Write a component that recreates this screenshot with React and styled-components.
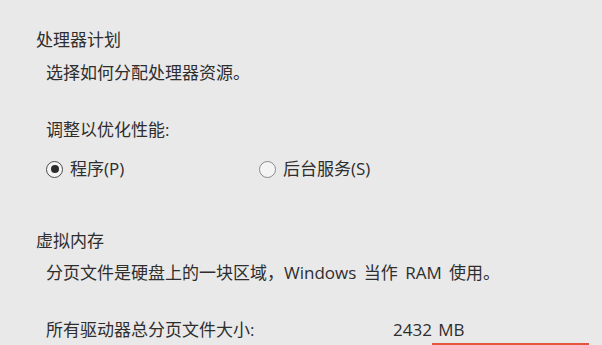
import React from 'react'
import styled, { createGlobalStyle } from 'styled-components'

const GlobalStyle = createGlobalStyle`
  html, body {
    margin: 0;
    padding: 0;
    background: #e9e9e9;
  }
  body {
    font-family: "Open Sans", "Noto Sans CJK SC", sans-serif;
    color: #2e2e2e;
  }
`

const Page = styled.div`
  width: 602px;
  height: 345px;
  overflow: hidden;
  box-sizing: border-box;
  padding: 28px 0 0 36px;
  background: #e9e9e9;
`

const SectionTitle = styled.div`
  font-size: 17px;
  line-height: 24px;
  margin-top: ${p => p.$top || 0}px;
`

const Body = styled.div`
  padding-left: 10px;
`

const Line = styled.div`
  font-size: 17px;
  line-height: 24px;
  margin-top: ${p => p.$top || 0}px;
  white-space: nowrap;
  word-spacing: ${p => (p.$spaced ? '3px' : 'normal')};
`

const RadioRow = styled.div`
  display: grid;
  grid-template-columns: 213px auto;
  margin-top: 15px;
  height: 24px;
`

const RadioLabel = styled.label`
  display: flex;
  align-items: center;
  gap: 7px;
  font-size: 17px;
  line-height: 24px;
`

const Circle = styled.span`
  width: 17px;
  height: 17px;
  box-sizing: border-box;
  border-radius: 50%;
  border: 1.5px solid ${p => (p.$checked ? '#4a4a4a' : '#8a8a8a')};
  background: #f4f4f4;
  display: flex;
  align-items: center;
  justify-content: center;

  &::after {
    content: '';
    width: 8px;
    height: 8px;
    border-radius: 50%;
    background: #2b2b2b;
    display: ${p => (p.$checked ? 'block' : 'none')};
  }
`

const ValueRow = styled.div`
  display: grid;
  grid-template-columns: 347px auto;
  font-size: 17px;
  line-height: 24px;
  margin-top: 33px;
  white-space: nowrap;
  word-spacing: 2px;
`

const Highlight = styled.div`
  margin: 1px 0 0 386px;
  width: 157px;
  height: 30px;
  box-sizing: border-box;
  border: 3px solid #e4563c;
  border-bottom: none;
`

function Radio ({ checked, children }) {
  return (
    <RadioLabel>
      <Circle $checked={checked} />
      {children}
    </RadioLabel>
  )
}

export default function App () {
  return (
    <>
      <GlobalStyle />
      <Page>
        <SectionTitle>处理器计划</SectionTitle>
        <Body>
          <Line $top={9}>选择如何分配处理器资源。</Line>
          <Line $top={33}>调整以优化性能:</Line>
          <RadioRow>
            <Radio checked>程序(P)</Radio>
            <Radio>后台服务(S)</Radio>
          </RadioRow>
        </Body>

        <SectionTitle $top={48}>虚拟内存</SectionTitle>
        <Body>
          <Line $top={8} $spaced>分页文件是硬盘上的一块区域，Windows 当作 RAM 使用。</Line>
          <ValueRow>
            <span>所有驱动器总分页文件大小:</span>
            <span>2432 MB</span>
          </ValueRow>
          <Highlight />
        </Body>
      </Page>
    </>
  )
}
